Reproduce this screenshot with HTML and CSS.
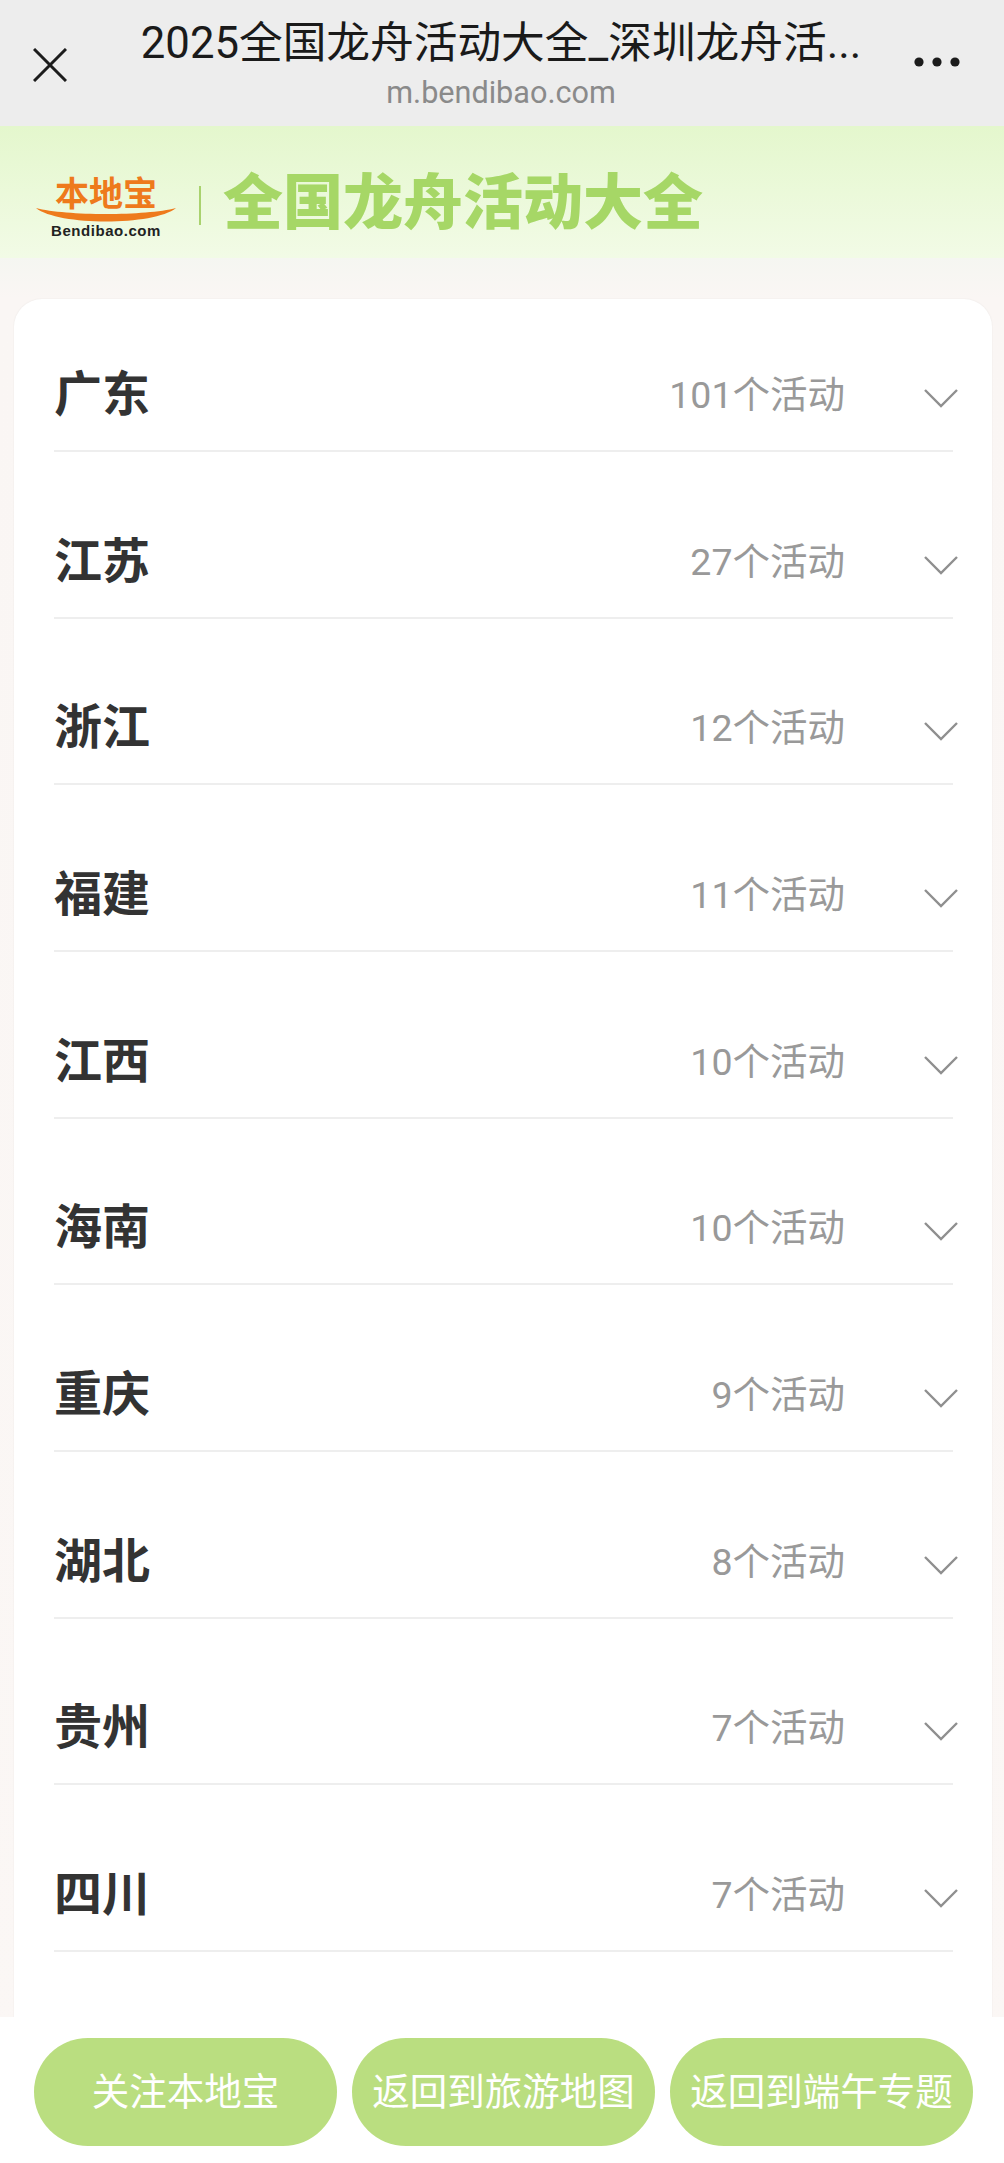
FILE: index.html
```html
<!DOCTYPE html>
<html lang="zh-CN">
<head>
<meta charset="utf-8">
<title>全国龙舟活动大全</title>
<link rel="stylesheet" href="styles.css">
</head>
<body>
<div class="page">
  <header class="topbar">
    <svg class="close" width="34" height="34" viewBox="0 0 34 34"><path d="M1 1 33 33M33 1 1 33" fill="none" stroke="#1c1c1c" stroke-width="3"/></svg>
    <div class="titles">
      <div class="title">2025全国龙舟活动大全_深圳龙舟活...</div>
      <div class="url">m.bendibao.com</div>
    </div>
    <svg class="more" width="46" height="10" viewBox="0 0 46 10"><circle cx="5" cy="5" r="4.6" fill="#1c1c1c"/><circle cx="23" cy="5" r="4.6" fill="#1c1c1c"/><circle cx="41" cy="5" r="4.6" fill="#1c1c1c"/></svg>
  </header>
  <section class="hero">
    <div class="logo">
      <div class="logo-cn">本地宝</div>
      <svg class="swoosh" width="140" height="14" viewBox="0 0 140 14"><path d="M0 0C30 8 110 8 140 0 118 18 22 18 0 0Z" fill="#ee7a1c"/></svg>
      <div class="logo-en">Bendibao.com</div>
    </div>
    <div class="divider"></div>
    <h1 class="heading">全国龙舟活动大全</h1>
  </section>
  <main class="content">
    <ul class="card">
      <li class="row"><span class="name">广东</span><span class="count">101个活动</span><svg class="chev" width="34" height="19" viewBox="0 0 34 19"><path d="M1 1 17 17 33 1" fill="none" stroke="#8f8f8f" stroke-width="2.4"/></svg></li>
      <li class="row"><span class="name">江苏</span><span class="count">27个活动</span><svg class="chev" width="34" height="19" viewBox="0 0 34 19"><path d="M1 1 17 17 33 1" fill="none" stroke="#8f8f8f" stroke-width="2.4"/></svg></li>
      <li class="row"><span class="name">浙江</span><span class="count">12个活动</span><svg class="chev" width="34" height="19" viewBox="0 0 34 19"><path d="M1 1 17 17 33 1" fill="none" stroke="#8f8f8f" stroke-width="2.4"/></svg></li>
      <li class="row"><span class="name">福建</span><span class="count">11个活动</span><svg class="chev" width="34" height="19" viewBox="0 0 34 19"><path d="M1 1 17 17 33 1" fill="none" stroke="#8f8f8f" stroke-width="2.4"/></svg></li>
      <li class="row"><span class="name">江西</span><span class="count">10个活动</span><svg class="chev" width="34" height="19" viewBox="0 0 34 19"><path d="M1 1 17 17 33 1" fill="none" stroke="#8f8f8f" stroke-width="2.4"/></svg></li>
      <li class="row"><span class="name">海南</span><span class="count">10个活动</span><svg class="chev" width="34" height="19" viewBox="0 0 34 19"><path d="M1 1 17 17 33 1" fill="none" stroke="#8f8f8f" stroke-width="2.4"/></svg></li>
      <li class="row"><span class="name">重庆</span><span class="count">9个活动</span><svg class="chev" width="34" height="19" viewBox="0 0 34 19"><path d="M1 1 17 17 33 1" fill="none" stroke="#8f8f8f" stroke-width="2.4"/></svg></li>
      <li class="row"><span class="name">湖北</span><span class="count">8个活动</span><svg class="chev" width="34" height="19" viewBox="0 0 34 19"><path d="M1 1 17 17 33 1" fill="none" stroke="#8f8f8f" stroke-width="2.4"/></svg></li>
      <li class="row"><span class="name">贵州</span><span class="count">7个活动</span><svg class="chev" width="34" height="19" viewBox="0 0 34 19"><path d="M1 1 17 17 33 1" fill="none" stroke="#8f8f8f" stroke-width="2.4"/></svg></li>
      <li class="row"><span class="name">四川</span><span class="count">7个活动</span><svg class="chev" width="34" height="19" viewBox="0 0 34 19"><path d="M1 1 17 17 33 1" fill="none" stroke="#8f8f8f" stroke-width="2.4"/></svg></li>
    </ul>
  </main>
  <nav class="actions">
    <a class="btn">关注本地宝</a>
    <a class="btn">返回到旅游地图</a>
    <a class="btn">返回到端午专题</a>
  </nav>
</div>
</body>
</html>
```
FILE: styles.css
```css
* { box-sizing: border-box; }
html, body { margin: 0; padding: 0; height: 2163px; overflow: hidden; }
body { font-family: Roboto, "Noto Sans CJK SC", sans-serif; background: #fff; }
.page { position: relative; display: flex; flex-direction: column; width: 1004px; height: 2163px; overflow: hidden; }

.topbar { display: flex; align-items: center; flex: 0 0 126px; height: 126px; padding: 0 44px 0 33px; background: #ededed; }
.close { flex: none; margin-top: 4px; }
.titles { flex: 1; min-width: 0; display: flex; flex-direction: column; align-items: center; padding-left: 21px; }
.title { font-size: 43.7px; line-height: 50px; color: #1a1a1a; white-space: nowrap; margin-top: 2px; }
.url { font-size: 30.6px; line-height: 36px; color: #8a8a8a; margin-top: 7px; }
.more { flex: none; margin-top: -2px; }

.hero { display: flex; align-items: center; flex: 0 0 132px; height: 132px; padding: 24px 0 0 36px; background: linear-gradient(180deg, #e4f7cd 0%, #f2fbe6 100%); }
.logo { display: flex; flex-direction: column; align-items: center; width: 140px; margin-top: 8px; }
.logo-cn { font-size: 34px; line-height: 34px; font-weight: 700; color: #ee7a1c; }
.swoosh { display: block; margin-top: -3px; }
.logo-en { font-family: "Liberation Sans", sans-serif; font-size: 15px; line-height: 16px; font-weight: 700; letter-spacing: .55px; color: #222; margin-top: 1px; }
.divider { flex: none; width: 2px; height: 39px; margin: 2px 22px 0 23px; background: #a9d26e; }
.heading { margin: 0; font-size: 60px; line-height: 70px; font-weight: 900; color: #a6d766; white-space: nowrap; }

.content { flex: 1; min-height: 0; padding: 41px 12px 0 14px; background: linear-gradient(180deg, #f5f6f1 0, #faf6f4 40px, #fbf7f5 100%); }
.card { list-style: none; margin: 0; height: 100%; padding: 41px 39px 0 40px; display: flex; flex-direction: column; gap: 54.67px; background: #fff; border-radius: 28px 28px 0 0; box-shadow: 0 0 2px rgba(0,0,0,.07); }
.row { display: flex; align-items: center; flex: 0 0 112px; height: 112px; border-bottom: 2px solid #eeeeee; position: relative; }
.name { font-size: 48px; line-height: 60px; font-weight: 700; color: #333; }
.count { margin-left: auto; font-size: 37.5px; line-height: 46px; color: #999; margin-right: 108px; }
.chev { position: absolute; right: -5px; top: 49px; }

.actions { position: absolute; left: 0; right: 0; bottom: 0; height: 146px; display: flex; gap: 15px; padding: 21px 31px 17px 34px; background: #fff; }
.btn { flex: 1; display: flex; align-items: center; justify-content: center; height: 108px; border-radius: 54px; background: #bade80; color: #fff; font-size: 37.5px; line-height: 44px; font-weight: 400; white-space: nowrap; }
```
